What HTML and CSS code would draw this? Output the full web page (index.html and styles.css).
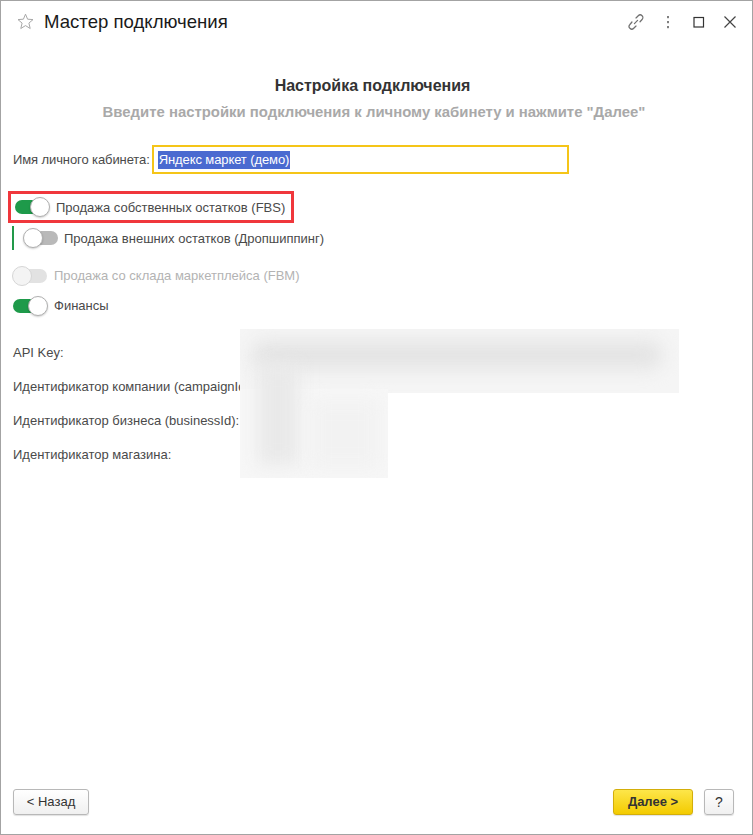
FILE: index.html
```html
<!DOCTYPE html>
<html lang="ru">
<head>
<meta charset="utf-8">
<title>Мастер подключения</title>
<link rel="stylesheet" href="styles.css">
</head>
<body>
<div class="window">
  <div class="titlebar">
    <svg class="star" width="17" height="17" viewBox="0 0 17 17"><path d="M8.5 1.2 L10.6 6.2 L16 6.6 L11.9 10.1 L13.2 15.5 L8.5 12.6 L3.8 15.5 L5.1 10.1 L1 6.6 L6.4 6.2 Z" fill="none" stroke="#a8a8a8" stroke-width="1" stroke-linejoin="round"/></svg>
    <div class="title">Мастер подключения</div>
    <div class="tools">
      <svg class="tool" width="18" height="18" viewBox="0 0 16 16"><g fill="none" stroke="#707070" stroke-width="1.1" stroke-linecap="round"><path d="M6.6 9.4 L9.4 6.6"/><path d="M8 4.4 L10 2.4 a2.4 2.4 0 0 1 3.4 3.4 L11.6 7.8"/><path d="M8 11.6 L6 13.6 a2.4 2.4 0 0 1 -3.4 -3.4 L4.4 8"/></g></svg>
      <svg class="tool" width="16" height="16" viewBox="0 0 16 16"><g fill="#808080"><rect x="7" y="2" width="2" height="2.2"/><rect x="7" y="7" width="2" height="2.2"/><rect x="7" y="12" width="2" height="2.2"/></g></svg>
      <svg class="tool" width="16" height="16" viewBox="0 0 16 16"><rect x="3" y="3.5" width="9.5" height="9.5" fill="none" stroke="#333" stroke-width="1.2"/></svg>
      <svg class="tool" width="16" height="16" viewBox="0 0 16 16"><path d="M2.5 2.5 L13.5 13.5 M13.5 2.5 L2.5 13.5" stroke="#444" stroke-width="1.2"/></svg>
    </div>
  </div>

  <div class="content">
    <h1 class="heading">Настройка подключения</h1>
    <p class="subtitle">Введите настройки подключения к личному кабинету и нажмите "Далее"</p>

    <div class="name-row">
      <span class="label">Имя личного кабинета:</span>
      <div class="input"><span class="selected">Яндекс маркет (демо)</span></div>
    </div>

    <div class="toggles">
      <div class="toggle-row focused">
        <span class="switch on"><span class="knob"></span></span>
        <span class="toggle-text">Продажа собственных остатков (FBS)</span>
      </div>
      <div class="toggle-row sub">
        <span class="switch off"><span class="knob"></span></span>
        <span class="toggle-text">Продажа внешних остатков (Дропшиппинг)</span>
      </div>
      <div class="toggle-row disabled">
        <span class="switch dis"><span class="knob"></span></span>
        <span class="toggle-text">Продажа со склада маркетплейса (FBM)</span>
      </div>
      <div class="toggle-row">
        <span class="switch on"><span class="knob"></span></span>
        <span class="toggle-text">Финансы</span>
      </div>
    </div>

    <div class="api">
      <div class="api-label">API Key:</div>
      <div class="api-label">Идентификатор компании (campaignId):</div>
      <div class="api-label">Идентификатор бизнеса (businessId):</div>
      <div class="api-label">Идентификатор магазина:</div>
      <div class="blur-area">
        <div class="blob b1"></div>
        <div class="blob b2"></div>
        <div class="blob b3"></div>
        <div class="blob b4"></div>
        <div class="blob b5"></div>
      </div>
    </div>
  </div>

  <div class="footer">
    <button class="btn">&lt; Назад</button>
    <div class="spacer"></div>
    <button class="btn primary">Далее &gt;</button>
    <button class="btn help">?</button>
  </div>
</div>
</body>
</html>
```

FILE: styles.css
```css
* { box-sizing: border-box; }
html, body { margin: 0; padding: 0; background: #fff; }
body {
  font-family: "Liberation Sans", Arial, sans-serif;
  font-size: 13px;
  color: #4a4a4a;
}
.window {
  width: 753px;
  height: 835px;
  border: 1px solid #a3a3a3;
  display: flex;
  flex-direction: column;
  background: #fff;
}
.titlebar {
  height: 42px;
  display: flex;
  align-items: center;
  padding: 0 0 0 16px;
  flex-shrink: 0;
}
.star { margin-top: -1px; }
.title {
  margin-left: 10px;
  font-size: 18.6px;
  color: #1a1a1a;
  flex: 1;
}
.tools {
  display: flex;
  align-items: center;
  gap: 15px;
  padding-right: 14px;
}
.content {
  flex: 1;
  padding: 0 0 0 12px;
}
.heading {
  margin: 33px 0 0 0;
  padding-right: 20px;
  text-align: center;
  font-size: 16px;
  font-weight: bold;
  color: #333;
  line-height: 19px;
}
.subtitle {
  margin: 8px 0 0 0;
  padding-right: 17px;
  text-align: center;
  font-size: 14.9px;
  font-weight: bold;
  color: #a9a9a9;
  line-height: 18px;
}
.name-row {
  display: flex;
  align-items: center;
  margin-top: 24px;
  height: 29px;
}
.label { color: #4a4a4a; letter-spacing: -0.1px; }
.input {
  margin-left: 2px;
  width: 417px;
  height: 29px;
  border: 2px solid #f5c518;
  display: flex;
  align-items: center;
  padding-left: 4px;
}
.selected {
  background: #4a6ad0;
  color: #fff;
  line-height: 18px;
  padding: 0 1px;
  letter-spacing: -0.1px;
}
.toggles {
  margin-top: 17px;
  display: flex;
  flex-direction: column;
}
.toggle-row {
  display: flex;
  align-items: center;
  height: 31px;
  gap: 7px;
}
.toggle-row.focused {
  margin-left: -5px;
  width: 286px;
  height: 32px;
  border: 3px solid #f0373c;
  padding-left: 4px;
}
.toggle-row.sub {
  height: 24px;
  margin-top: 3px;
  margin-left: -1px;
  border-left: 2px solid #22994a;
  padding-left: 10px;
  gap: 6px;
}
.toggle-row.disabled { margin-top: 11px; height: 29px; }
.toggle-row.disabled .toggle-text { color: #b3b3b3; }
.switch {
  position: relative;
  width: 34px;
  height: 14px;
  border-radius: 7px;
  display: inline-block;
  flex-shrink: 0;
}
.switch.on { background: #1e9a4a; }
.switch.off { background: #b9b9b9; }
.switch.dis { background: #e2e2e2; }
.knob {
  position: absolute;
  top: -3px;
  width: 20px;
  height: 20px;
  border-radius: 50%;
  background: #fff;
  border: 1px solid #b0b0b0;
  box-shadow: 0 1px 2px rgba(0,0,0,0.2);
}
.switch.on .knob { right: -1px; }
.switch.off .knob, .switch.dis .knob { left: -1px; }
.switch.dis .knob { border-color: #d6d6d6; box-shadow: none; background: #f4f4f4; }
.toggle-text { color: #4a4a4a; white-space: nowrap; }

.api {
  position: relative;
  margin-top: 15px;
  display: flex;
  flex-direction: column;
}
.api-label {
  height: 34px;
  line-height: 34px;
  white-space: nowrap;
}
.blur-area {
  position: absolute;
  left: 227px;
  top: -7px;
  width: 439px;
  height: 149px;
  overflow: hidden;
  background: #fff;
  clip-path: polygon(0 0, 100% 0, 100% 64px, 148px 64px, 148px 100%, 0 100%);
}
.blob { position: absolute; filter: blur(9px); }
.b1 { left: 0; top: 0; width: 439px; height: 66px; background: #f5f5f5; filter: none; }
.b2 { left: 12px; top: 12px; width: 410px; height: 28px; background: #e4e4e4; border-radius: 12px; }
.b3 { left: 0; top: 60px; width: 148px; height: 100px; background: #f7f7f7; filter: none; }
.b4 { left: 18px; top: 36px; width: 40px; height: 100px; background: #e9e9e9; }
.b5 { left: 70px; top: 70px; width: 70px; height: 70px; background: #f2f2f2; }

.footer {
  display: flex;
  align-items: center;
  padding: 0 18px 13px 12px;
  height: 52px;
  flex-shrink: 0;
}
.spacer { flex: 1; }
.btn {
  font-family: "Liberation Sans", Arial, sans-serif;
  font-size: 13px;
  color: #333;
  height: 26px;
  border: 1px solid #b8b8b8;
  border-radius: 3px;
  background: linear-gradient(#ffffff, #f0f0f0);
  box-shadow: 0 1px 1px rgba(0,0,0,0.12);
  padding: 0;
  width: 76px;
}
.btn.primary {
  width: 80px;
  font-weight: bold;
  background: linear-gradient(#fde64a, #f3cb00);
  border-color: #d3ae0a;
  color: #333;
}
.btn.help { width: 30px; margin-left: 11px; font-size: 14px; }
```
